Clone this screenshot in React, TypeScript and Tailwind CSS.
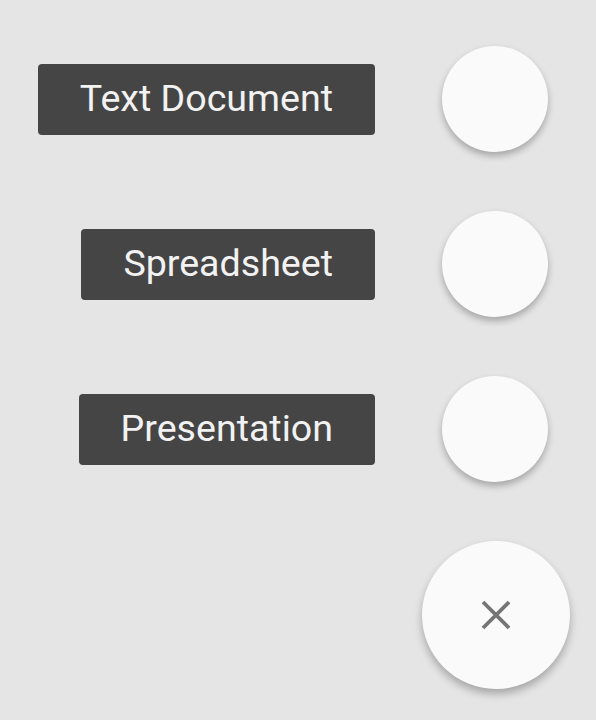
import React from "react";

const items = ["Text Document", "Spreadsheet", "Presentation"];

export default function App() {
  return (
    <div
      className="h-[720px] w-full bg-[#e5e5e5] flex flex-col items-end pr-[26px] pt-[46px] gap-[59px]"
      style={{ fontFamily: "Roboto, 'Noto Sans', sans-serif" }}
    >
      {items.map((label) => (
        <div key={label} className="flex items-center">
          <div className="h-[71px] flex items-center px-[42px] bg-[#454545] rounded-[4px] text-[37.6px] text-[#f2f2f2] leading-none mr-[45px]">
            {label}
          </div>
          <div className="w-[150px] flex justify-center">
            <div className="w-[106px] h-[106px] rounded-full bg-[#fafafa] shadow-[0_4px_7px_rgba(0,0,0,0.28)]" />
          </div>
        </div>
      ))}
      <div className="w-[148px] h-[148px] rounded-full bg-[#fafafa] shadow-[0_5px_9px_rgba(0,0,0,0.28)] flex items-center justify-center">
        <svg width="30" height="30" viewBox="0 0 30 30">
          <path d="M2 2 L28 28 M28 2 L2 28" stroke="#757575" strokeWidth="3.8" strokeLinecap="butt" />
        </svg>
      </div>
    </div>
  );
}
